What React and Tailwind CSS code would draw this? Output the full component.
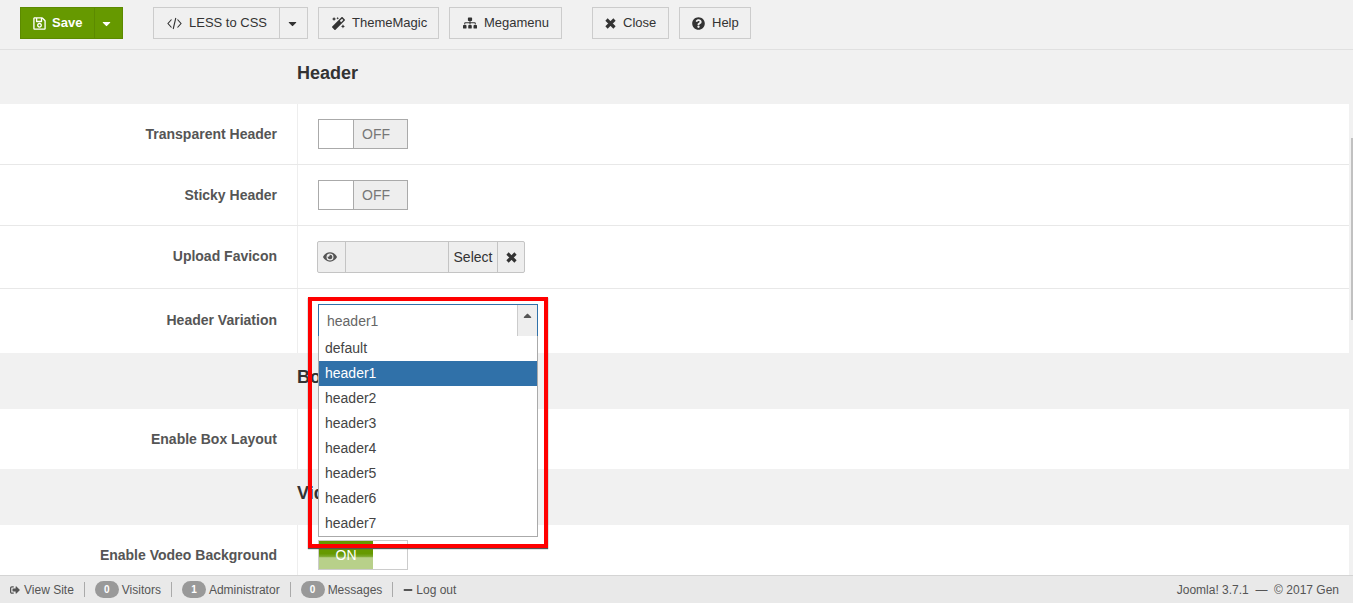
import { FaRegSave, FaMagic, FaSitemap, FaQuestionCircle, FaEye, FaCaretDown, FaCaretUp, FaSignOutAlt, FaMinus } from 'react-icons/fa';

const ToolButton = ({ icon, label, className = '' }) => (
  <button className={`h-8 flex items-center gap-[7px] bg-[#f0f0f0] border border-[#ccc] text-[#333] text-[13px] ${className}`}>
    {icon}
    {label}
  </button>
);

const CodeIcon = () => (
  <svg width="15" height="15" viewBox="0 0 15 15" fill="none" stroke="currentColor" strokeWidth="1.1">
    <path d="M4.5 3.5 1 7.5l3.5 4M10.5 3.5l3.5 4-3.5 4M8.8 2 6.2 13" />
  </svg>
);

// chunky close cross
const CrossIcon = ({ className = '' }) => (
  <svg className={className} width="11" height="11" viewBox="0 0 11 11" fill="none" stroke="currentColor" strokeWidth="3.2">
    <path d="M1.5 1.5l8 8M9.5 1.5l-8 8" />
  </svg>
);

const Toggle = () => (
  <div className="w-[90px] h-[30px] flex border border-[#aaa] bg-white">
    <div className="w-[35px] border-r border-[#aaa]" />
    <div className="flex-1 bg-[#eeeeee] text-[#777] text-sm leading-[28px] pl-2">OFF</div>
  </div>
);

const Row = ({ label, height, last, labelClass = '', children }) => (
  <div className={`flex bg-white ${last ? '' : 'border-b border-[#e8e8e8]'} ${height}`}>
    <div className={`w-[298px] shrink-0 border-r border-[#eeeeee] flex items-center justify-end pr-5 font-bold text-sm text-[#555] ${labelClass}`}>
      {label}
    </div>
    <div className="pl-5 flex items-center relative">{children}</div>
  </div>
);

const Heading = ({ title, height }) => (
  <div className={`pl-[297px] pb-2 flex items-center font-bold text-lg text-[#333] ${height}`}>{title}</div>
);

const Badge = ({ n }) => (
  <span className="w-6 h-[17px] rounded-full bg-[#999] text-white text-[10px] font-bold flex items-center justify-center">{n}</span>
);

const Sep = () => <span className="w-px h-[15px] bg-[#aaa] mx-[10px]" />;

const options = ['default', 'header1', 'header2', 'header3', 'header4', 'header5', 'header6', 'header7'];

export default function App() {
  return (
    <div className="relative h-[603px] overflow-hidden bg-[#f1f1f1] font-['Liberation_Sans',sans-serif]">
      {/* Toolbar */}
      <div className="h-[50px] border-b border-[#e0e0e0] flex items-start pt-[7px] pl-5">
        <div className="flex h-8 bg-[#669900] border border-[#5c8a00] text-white text-[13px] font-bold">
          <div className="w-[73px] flex items-center gap-[6px] pl-3">
            <FaRegSave className="text-[13px] scale-[1.1]" />
            Save
          </div>
          <div className="w-[28px] border-l border-[#5c8a00] flex items-center justify-center pr-1">
            <FaCaretDown className="text-[13px]" />
          </div>
        </div>
        <div className="flex ml-[30px]">
          <ToolButton className="w-[127px] pl-[13px]" icon={<CodeIcon />} label="LESS to CSS" />
          <button className="w-[29px] h-8 -ml-px bg-[#f0f0f0] border border-[#ccc] text-[#333] flex items-center justify-center pr-[3px]">
            <FaCaretDown className="text-[13px]" />
          </button>
        </div>
        <ToolButton className="w-[121px] pl-[13px] ml-[10px]" icon={<FaMagic className="text-[13px]" />} label="ThemeMagic" />
        <ToolButton className="w-[113px] pl-[13px] ml-[10px]" icon={<FaSitemap className="text-[14px]" />} label="Megamenu" />
        <ToolButton className="w-[77px] pl-[12px] ml-[30px]" icon={<CrossIcon />} label="Close" />
        <ToolButton className="w-[72px] pl-[12px] ml-[10px]" icon={<FaQuestionCircle className="text-[13px]" />} label="Help" />
      </div>

      {/* Form */}
      <div className="mr-1">
        <Heading title="Header" height="h-[54px]" />
        <Row label="Transparent Header" height="h-[61px]"><Toggle /></Row>
        <Row label="Sticky Header" height="h-[61px]"><Toggle /></Row>
        <Row label="Upload Favicon" height="h-[63px]" labelClass="pb-[2px]">
          <div className="-ml-px w-[208px] h-8 flex items-stretch rounded-[2px] border border-[#c4c4c4] bg-[#eeeeee] text-[#333] text-sm">
            <div className="w-[28px] border-r border-[#c4c4c4] flex items-center justify-center pr-[3px] text-[#555]"><FaEye className="text-[14px]" /></div>
            <div className="flex-1 border-r border-[#c4c4c4]" />
            <div className="w-[49px] border-r border-[#c4c4c4] flex items-center justify-center">Select</div>
            <div className="w-[26px] flex items-center justify-center"><CrossIcon /></div>
          </div>
        </Row>
        <Row label="Header Variation" height="h-[64px]" last labelClass="pb-[3px]">
          <div className="w-[220px] h-[32px]" />
          {/* open select list */}
          <div className="absolute left-5 top-[15px] w-[220px] z-20 text-sm text-[#444]">
            <div className="h-8 flex bg-white border border-[#3071a9] border-b-0">
              <div className="flex-1 pl-2 leading-[33px] text-[#666]">header1</div>
              <div className="w-5 bg-[#eeeeee] border-l border-[#ccc] flex justify-center pt-1 text-[#555]"><FaCaretUp className="text-[13px]" /></div>
            </div>
            <div className="bg-white border border-[#aaa] border-t-0 h-[201px]">
              {options.map((o) => (
                <div key={o} className={`h-[25px] leading-[25px] pl-[6px] ${o === 'header1' ? 'bg-[#3071a9] text-white' : ''}`}>{o}</div>
              ))}
            </div>
          </div>
        </Row>
        <Heading title="Box Layout" height="h-[56px]" />
        <Row label="Enable Box Layout" height="h-[60px]" last />
        <Heading title="Video" height="h-[56px]" />
        <Row label="Enable Vodeo Background" height="h-[60px]">
          <div className="w-[90px] h-[30px] flex border border-[#ccc] bg-white">
            <div className="w-[54px] text-white text-sm text-center leading-[28px] bg-[linear-gradient(#669900_0_45%,#7ba82a_55%,#b8d08a_60%,#b8d08a_100%)]">ON</div>
          </div>
        </Row>
      </div>

      {/* Red annotation */}
      <div className="absolute left-[308px] top-[297px] w-[240px] h-[251px] border-4 border-[#ff0000] shadow-[0_1px_1px_#555] z-30 pointer-events-none" />

      {/* Page scrollbar */}
      <div className="absolute right-0 top-[138px] w-[2px] h-[182px] bg-[#c1c1c1]" />

      {/* Footer */}
      <div className="absolute left-0 right-0 bottom-0 h-[28px] z-40 bg-[#e9e9e9] border-t border-[#d4d4d4] flex items-center pl-[10px] pr-[14px] text-xs text-[#555]">
        <FaSignOutAlt className="text-[10px] mr-[4px]" />
        View Site
        <Sep />
        <Badge n="0" /><span className="ml-[3px]">Visitors</span>
        <Sep />
        <Badge n="1" /><span className="ml-[3px]">Administrator</span>
        <Sep />
        <Badge n="0" /><span className="ml-[3px]">Messages</span>
        <Sep />
        <FaMinus className="text-[10px] mr-[3px]" />
        Log out
        <span className="ml-auto">Joomla! 3.7.1 &nbsp;— &nbsp;© 2017 Gen</span>
      </div>
    </div>
  );
}
